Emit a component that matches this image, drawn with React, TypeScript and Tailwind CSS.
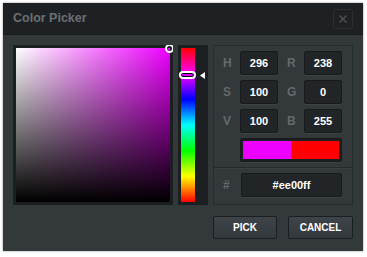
import React from "react";

const font = { fontFamily: '"Liberation Sans", Arial, sans-serif' };

function Box({ children, w = "w-[38px]" }: { children: React.ReactNode; w?: string }) {
  return (
    <div
      className={`${w} h-[24px] flex items-center justify-center rounded-[2px] bg-[#222527] border border-[#17191a] shadow-[0_1px_0_#3d4245] text-white text-[11px] font-bold`}
    >
      {children}
    </div>
  );
}

function Row({ l1, v1, l2, v2 }: { l1: string; v1: string; l2: string; v2: string }) {
  return (
    <div className="flex items-center">
      <div className="w-[17px] text-[12px] font-bold text-[#66696c]">{l1}</div>
      <Box>{v1}</Box>
      <div className="w-[17px] ml-[9px] text-[12px] font-bold text-[#66696c]">{l2}</div>
      <Box>{v2}</Box>
    </div>
  );
}

export default function App() {
  return (
    <div className="w-[367px] h-[257px] bg-white pt-[3px] pl-[3px]" style={font}>
      <div className="w-[360px] h-[248px] bg-[#33383b] shadow-[0_0_2px_rgba(0,0,0,0.45)] flex flex-col">
        <div className="h-[32px] bg-[#1e2123] flex items-center justify-between pl-[10px] pr-[10px] border-b border-[#181a1c]">
          <span className="text-[12.5px] font-bold text-[#6b6f73]">Color Picker</span>
          <div className="w-[20px] h-[20px] mt-[1px] border border-[#2b2f32] rounded-[2px] flex items-center justify-center">
            <svg width="10" height="10" viewBox="0 0 10 10">
              <path d="M1.5 1.5 L8.5 8.5 M8.5 1.5 L1.5 8.5" stroke="#4b4f52" strokeWidth="1.6" />
            </svg>
          </div>
        </div>
        <div className="flex flex-col pl-[10px] pt-[10px]">
          <div className="flex gap-[5px]">
            <div className="w-[160px] h-[160px] bg-[#1c1f21] p-[3px] relative overflow-hidden">
              <div
                className="w-full h-full"
                style={{
                  background:
                    "linear-gradient(to bottom, rgba(0,0,0,0), #000), linear-gradient(to right, #fff, rgba(255,255,255,0)), #ee00ff",
                }}
              />
              <div className="absolute left-[152px] top-[-1px] w-[9px] h-[9px] rounded-full border-2 border-white shadow-[inset_0_0_0_1px_rgba(0,0,0,0.4)]" />
            </div>
            <div className="w-[30px] h-[160px] bg-[#1c1f21] p-[3px] flex relative">
              <div
                className="w-[14px] h-full"
                style={{
                  background:
                    "linear-gradient(to bottom, #f00, #f0f, #00f, #0ff, #0f0, #ff0, #f00)",
                }}
              />
              <div className="absolute left-[1px] top-[26px] w-[17px] h-[8px] rounded-[4px] border-2 border-white bg-[#d900ff] shadow-[inset_0_0_0_1px_#000]" />
              <svg className="absolute left-[22px] top-[27px]" width="5" height="7" viewBox="0 0 5 7">
                <path d="M0 3.5 L5 0 L5 7 Z" fill="#fff" />
              </svg>
            </div>
            <div className="w-[140px] h-[160px] border border-[#282c2e] flex flex-col">
              <div className="flex flex-col gap-[5px] pl-[9px] pt-[5px]">
                <Row l1="H" v1="296" l2="R" v2="238" />
                <Row l1="S" v1="100" l2="G" v2="0" />
                <Row l1="V" v1="100" l2="B" v2="255" />
                <div className="flex">
                  <div className="w-[17px]" />
                  <div className="w-[102px] h-[24px] bg-[#1c1f21] border border-[#17191a] rounded-[2px] p-[2px] flex shadow-[0_1px_0_#3d4245]">
                    <div className="flex-1 bg-[#ee00ff]" />
                    <div className="flex-1 bg-[#ff0000]" />
                  </div>
                </div>
              </div>
              <div className="mt-[5px] h-[2px] border-t border-[#26292b] border-b border-b-[#3b4043]" />
              <div className="flex items-center pl-[9px] pt-[4px]">
                <div className="w-[18px] text-[12px] font-bold text-[#66696c]">#</div>
                <div className="w-[101px] h-[24px] flex items-center justify-center rounded-[2px] bg-[#222527] border border-[#17191a] shadow-[0_1px_0_#3d4245] text-white text-[11px] font-bold">
                  #ee00ff
                </div>
              </div>
            </div>
          </div>
          <div className="flex justify-end gap-[11px] pr-[10px] mt-[11px]">
            <div className="w-[64px] h-[23px] rounded-[2px] border border-[#1b1e20] bg-gradient-to-b from-[#3e4449] to-[#32383c] flex items-center justify-center text-white text-[10px] font-bold">
              PICK
            </div>
            <div className="w-[65px] h-[23px] rounded-[2px] border border-[#1b1e20] bg-gradient-to-b from-[#3e4449] to-[#32383c] flex items-center justify-center text-white text-[10px] font-bold">
              CANCEL
            </div>
          </div>
        </div>
      </div>
    </div>
  );
}
